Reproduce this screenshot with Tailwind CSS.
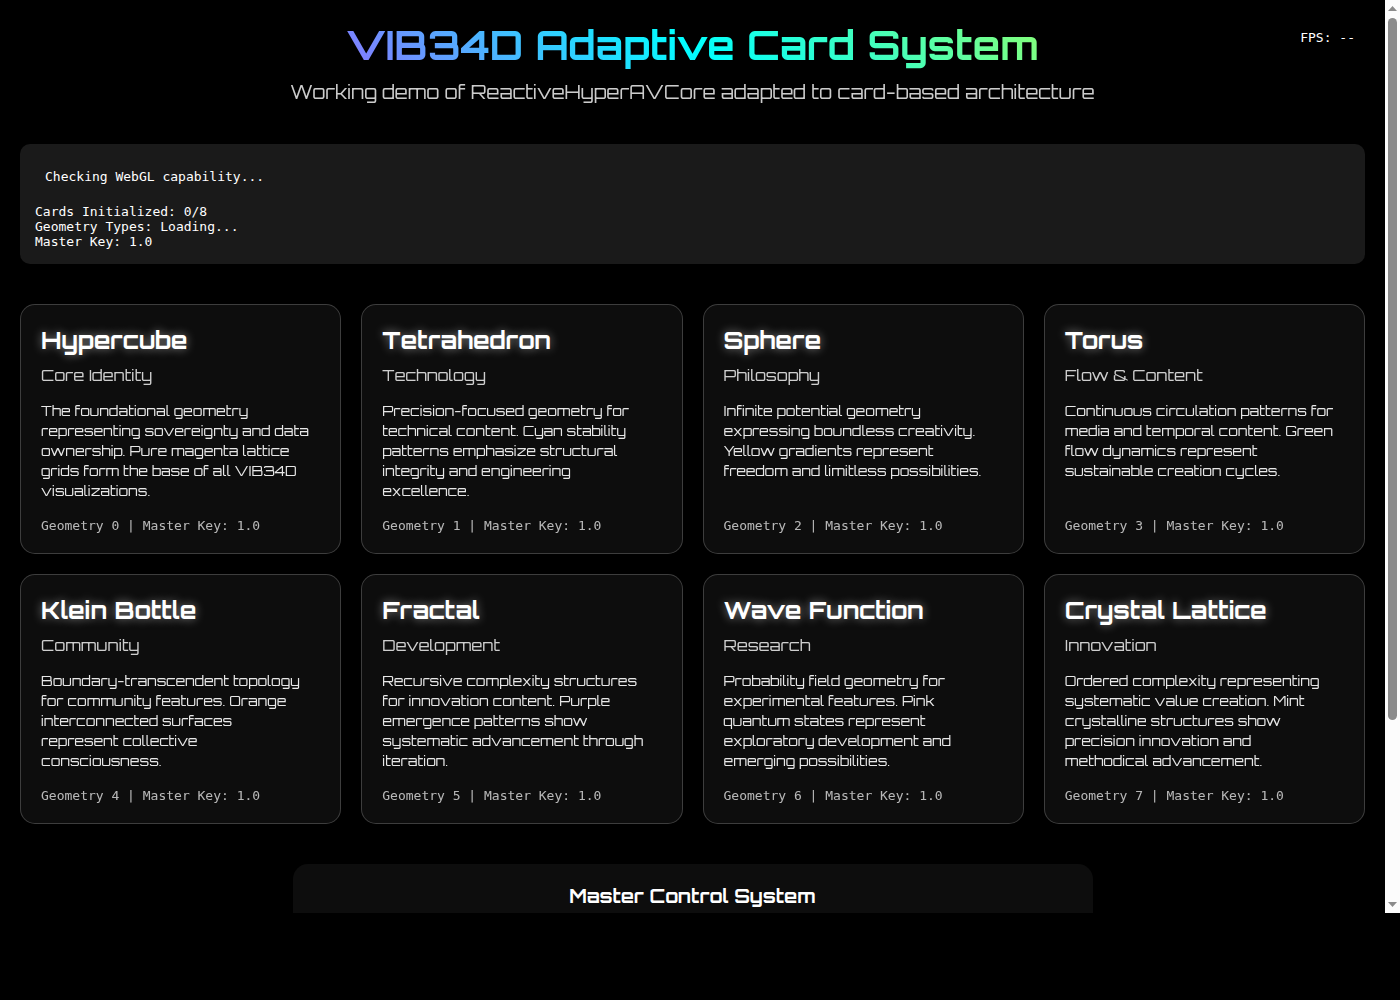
<!DOCTYPE html>
<html lang="en">
<head>
<meta charset="utf-8">
<meta name="viewport" content="width=device-width, initial-scale=1">
<title>VIB34D Adaptive Card System</title>
<script src="https://cdn.jsdelivr.net/npm/@tailwindcss/browser@4"></script>
</head>
<body class="flex h-screen flex-col overflow-hidden bg-black pb-[87px] font-['Orbitron','DejaVu_Sans',sans-serif] text-white">
<div class="flex min-h-0 flex-1">
  <main class="relative min-w-0 flex-1 overflow-hidden px-5 pt-5">
    <div class="absolute top-5 right-5 p-[10px] font-['DejaVu_Sans_Mono',monospace] text-[13px] leading-[15px]">FPS: --</div>
    <header class="text-center">
      <h1 class="bg-[linear-gradient(45deg,#ff00ff,#00ffff,#ffff00)] bg-clip-text text-[40px] leading-[50px] font-bold text-transparent">VIB34D Adaptive Card System</h1>
      <p class="mt-[10px] text-[19px] leading-6 opacity-80">Working demo of ReactiveHyperAVCore adapted to card-based architecture</p>
    </header>

    <section class="mt-10 rounded-[10px] bg-[#1a1a1a] p-[15px] font-['DejaVu_Sans_Mono',monospace] text-[13px] leading-[15px]">
      <p class="mb-[10px] p-[10px]">Checking WebGL capability...</p>
      <p>Cards Initialized: 0/8</p>
      <p>Geometry Types: Loading...</p>
      <p>Master Key: 1.0</p>
    </section>

    <section class="mt-10 grid grid-cols-4 gap-5 whitespace-nowrap">
      <article class="flex min-h-[250px] flex-col rounded-[15px] border border-white/20 bg-white/5 p-5">
        <h2 class="text-[24px] leading-[30px] font-bold [text-shadow:0_0_10px_rgba(255,255,255,0.5)]">Hypercube</h2>
        <h3 class="mt-[10px] text-[16px] leading-5 opacity-80">Core Identity</h3>
        <p class="mt-4 text-[14px] leading-5 opacity-90">The foundational geometry<br>representing sovereignty and data<br>ownership. Pure magenta lattice<br>grids form the base of all VIB34D<br>visualizations.</p>
        <p class="mt-auto font-['DejaVu_Sans_Mono',monospace] text-[13px] leading-[15px] opacity-70">Geometry 0 | Master Key: 1.0</p>
      </article>
      <article class="flex min-h-[250px] flex-col rounded-[15px] border border-white/20 bg-white/5 p-5">
        <h2 class="text-[24px] leading-[30px] font-bold [text-shadow:0_0_10px_rgba(255,255,255,0.5)]">Tetrahedron</h2>
        <h3 class="mt-[10px] text-[16px] leading-5 opacity-80">Technology</h3>
        <p class="mt-4 text-[14px] leading-5 opacity-90">Precision-focused geometry for<br>technical content. Cyan stability<br>patterns emphasize structural<br>integrity and engineering<br>excellence.</p>
        <p class="mt-auto font-['DejaVu_Sans_Mono',monospace] text-[13px] leading-[15px] opacity-70">Geometry 1 | Master Key: 1.0</p>
      </article>
      <article class="flex min-h-[250px] flex-col rounded-[15px] border border-white/20 bg-white/5 p-5">
        <h2 class="text-[24px] leading-[30px] font-bold [text-shadow:0_0_10px_rgba(255,255,255,0.5)]">Sphere</h2>
        <h3 class="mt-[10px] text-[16px] leading-5 opacity-80">Philosophy</h3>
        <p class="mt-4 text-[14px] leading-5 opacity-90">Infinite potential geometry<br>expressing boundless creativity.<br>Yellow gradients represent<br>freedom and limitless possibilities.</p>
        <p class="mt-auto font-['DejaVu_Sans_Mono',monospace] text-[13px] leading-[15px] opacity-70">Geometry 2 | Master Key: 1.0</p>
      </article>
      <article class="flex min-h-[250px] flex-col rounded-[15px] border border-white/20 bg-white/5 p-5">
        <h2 class="text-[24px] leading-[30px] font-bold [text-shadow:0_0_10px_rgba(255,255,255,0.5)]">Torus</h2>
        <h3 class="mt-[10px] text-[16px] leading-5 opacity-80">Flow &amp; Content</h3>
        <p class="mt-4 text-[14px] leading-5 opacity-90">Continuous circulation patterns for<br>media and temporal content. Green<br>flow dynamics represent<br>sustainable creation cycles.</p>
        <p class="mt-auto font-['DejaVu_Sans_Mono',monospace] text-[13px] leading-[15px] opacity-70">Geometry 3 | Master Key: 1.0</p>
      </article>
      <article class="flex min-h-[250px] flex-col rounded-[15px] border border-white/20 bg-white/5 p-5">
        <h2 class="text-[24px] leading-[30px] font-bold [text-shadow:0_0_10px_rgba(255,255,255,0.5)]">Klein Bottle</h2>
        <h3 class="mt-[10px] text-[16px] leading-5 opacity-80">Community</h3>
        <p class="mt-4 text-[14px] leading-5 opacity-90">Boundary-transcendent topology<br>for community features. Orange<br>interconnected surfaces<br>represent collective<br>consciousness.</p>
        <p class="mt-auto font-['DejaVu_Sans_Mono',monospace] text-[13px] leading-[15px] opacity-70">Geometry 4 | Master Key: 1.0</p>
      </article>
      <article class="flex min-h-[250px] flex-col rounded-[15px] border border-white/20 bg-white/5 p-5">
        <h2 class="text-[24px] leading-[30px] font-bold [text-shadow:0_0_10px_rgba(255,255,255,0.5)]">Fractal</h2>
        <h3 class="mt-[10px] text-[16px] leading-5 opacity-80">Development</h3>
        <p class="mt-4 text-[14px] leading-5 opacity-90">Recursive complexity structures<br>for innovation content. Purple<br>emergence patterns show<br>systematic advancement through<br>iteration.</p>
        <p class="mt-auto font-['DejaVu_Sans_Mono',monospace] text-[13px] leading-[15px] opacity-70">Geometry 5 | Master Key: 1.0</p>
      </article>
      <article class="flex min-h-[250px] flex-col rounded-[15px] border border-white/20 bg-white/5 p-5">
        <h2 class="text-[24px] leading-[30px] font-bold [text-shadow:0_0_10px_rgba(255,255,255,0.5)]">Wave Function</h2>
        <h3 class="mt-[10px] text-[16px] leading-5 opacity-80">Research</h3>
        <p class="mt-4 text-[14px] leading-5 opacity-90">Probability field geometry for<br>experimental features. Pink<br>quantum states represent<br>exploratory development and<br>emerging possibilities.</p>
        <p class="mt-auto font-['DejaVu_Sans_Mono',monospace] text-[13px] leading-[15px] opacity-70">Geometry 6 | Master Key: 1.0</p>
      </article>
      <article class="flex min-h-[250px] flex-col rounded-[15px] border border-white/20 bg-white/5 p-5">
        <h2 class="text-[24px] leading-[30px] font-bold [text-shadow:0_0_10px_rgba(255,255,255,0.5)]">Crystal Lattice</h2>
        <h3 class="mt-[10px] text-[16px] leading-5 opacity-80">Innovation</h3>
        <p class="mt-4 text-[14px] leading-5 opacity-90">Ordered complexity representing<br>systematic value creation. Mint<br>crystalline structures show<br>precision innovation and<br>methodical advancement.</p>
        <p class="mt-auto font-['DejaVu_Sans_Mono',monospace] text-[13px] leading-[15px] opacity-70">Geometry 7 | Master Key: 1.0</p>
      </article>
    </section>

    <section class="mx-auto mt-10 max-w-[800px] rounded-[15px] bg-[#0d0d0d] p-5 text-center">
      <h2 class="text-[19px] leading-6 font-bold">Master Control System</h2>
      <div class="h-40"></div>
    </section>
  </main>

  <div class="flex w-[15px] shrink-0 flex-col items-center bg-[#fcfcfc] py-[6px]" aria-hidden="true">
    <svg class="h-[5px] w-[9px]" viewBox="0 0 9 5" fill="#8b8b8b"><path d="M4.5 0 9 5H0z"/></svg>
    <div class="my-[7px] flex w-[9px] flex-1 flex-col">
      <div class="h-[80%] rounded-full bg-[#8b8b8b]"></div>
    </div>
    <svg class="h-[5px] w-[9px]" viewBox="0 0 9 5" fill="#8b8b8b"><path d="M0 0h9L4.500 5z"/></svg>
  </div>
</div>
</body>
</html>
